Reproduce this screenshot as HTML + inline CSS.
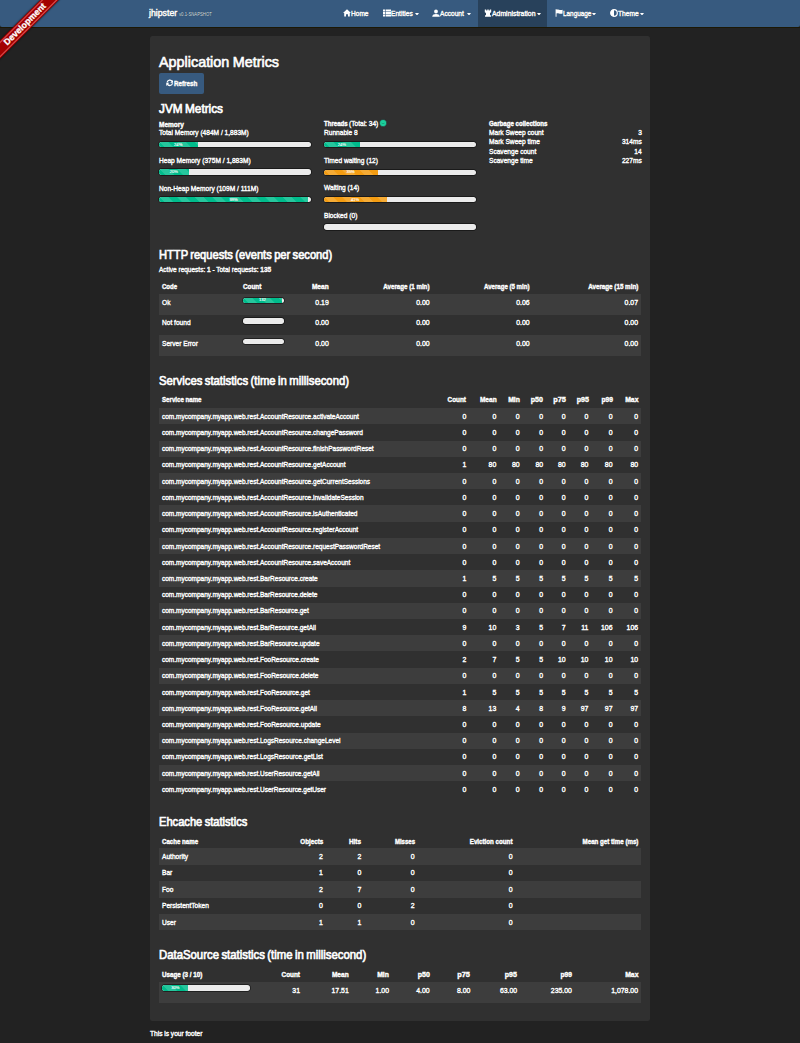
<!DOCTYPE html>
<html><head><meta charset="utf-8"><title>Metrics</title>
<style>
html,body{margin:0;padding:0;}
body{width:800px;height:1043px;background:#222222;position:relative;overflow:hidden;font-family:"Liberation Sans", sans-serif;color:#fff;}
.t{position:absolute;line-height:0;white-space:nowrap;-webkit-text-stroke:0.38px currentColor;text-shadow:0 0 0.7px rgba(0,0,0,.7);}
.ic{position:absolute;}
.caret{position:absolute;width:0;height:0;border-left:1.9px solid transparent;border-right:1.9px solid transparent;border-top:2.1px solid #fff;}
.prog{position:absolute;background:#ebebeb;overflow:hidden;box-shadow:0 0 0.6px 0.7px rgba(0,0,0,.6);}
.pb{height:100%;position:relative;background-image:linear-gradient(45deg,rgba(255,255,255,.15) 25%,transparent 25%,transparent 50%,rgba(255,255,255,.15) 50%,rgba(255,255,255,.15) 75%,transparent 75%,transparent);background-size:17.6px 17.6px;}
.pl{position:absolute;left:0;right:0;top:50%;text-align:center;font-size:4.1px;line-height:0;color:#fff;-webkit-text-stroke:0.12px #fff;}
.ribbon-wrap{position:absolute;left:0;top:0;width:90px;height:90px;overflow:hidden;z-index:10;}
.ribbon{position:absolute;left:-35.5px;top:18.1px;width:120px;height:12.7px;line-height:12.7px;background:#a30000;color:#fff;font-weight:700;font-size:8.8px;text-align:center;transform:rotate(-45deg);box-shadow:0 0 1.5px 0.5px rgba(0,0,0,.55);-webkit-text-stroke:0.3px #fff;}
.ribbon::after{content:"";position:absolute;left:0;right:0;top:0.9px;bottom:0.9px;border-top:0.7px solid rgba(255,140,140,.55);border-bottom:0.7px solid rgba(255,140,140,.65);}
</style></head><body>
<div style="position:absolute;left:0.00px;top:0.00px;width:800.00px;height:26.70px;background:#375a7f;border-radius:0 0 2px 2px"></div>
<div style="position:absolute;left:478.10px;top:0.00px;width:68.80px;height:26.70px;background:#28415b"></div>
<div style="position:absolute;left:0.00px;top:26.70px;width:800.00px;height:1.20px;background:#1c1805"></div>
<div class="t" style="left:149.00px;top:13.13px;font-size:9.0px;transform:scaleX(0.9719);transform-origin:left;-webkit-text-stroke-width:0.45px;">jhipster</div>
<div class="t" style="left:179.40px;top:14.64px;font-size:4.5px;color:#dde3ea;transform:scaleX(0.9435);transform-origin:left;-webkit-text-stroke-width:0px;">v0.1-SNAPSHOT</div>
<svg class="ic" style="left:343.1px;top:8.8px;width:8px;height:8px" viewBox="0 0 8 8"><path d="M4 0.3L0 4H1.2V7.6H3V5.2H5V7.6H6.8V4H8Z" fill="#fff"/></svg>
<div class="t" style="left:351.00px;top:13.61px;font-size:6.9px;transform:scaleX(0.9516);transform-origin:left;">Home</div>
<svg class="ic" style="left:382.5px;top:8.8px;width:8px;height:8px" viewBox="0 0 8 8"><path d="M0 0.6H2V2.4H0ZM2.6 0.6H8V2.4H2.6ZM0 3.1H2V4.9H0ZM2.6 3.1H8V4.9H2.6ZM0 5.6H2V7.4H0ZM2.6 5.6H8V7.4H2.6Z" fill="#fff"/></svg>
<div class="t" style="left:390.60px;top:13.61px;font-size:6.9px;transform:scaleX(0.9598);transform-origin:left;">Entities</div>
<svg class="ic" style="left:432.0px;top:8.8px;width:8px;height:8px" viewBox="0 0 8 8"><path d="M4 0.4A1.9 2.1 0 1 1 4 4.6A1.9 2.1 0 1 1 4 0.4ZM0.2 7.8C0.4 5.6 2 4.9 4 4.9S7.6 5.6 7.8 7.8Z" fill="#fff"/></svg>
<div class="t" style="left:440.00px;top:13.61px;font-size:6.9px;transform:scaleX(0.9556);transform-origin:left;">Account</div>
<svg class="ic" style="left:483.6px;top:8.8px;width:8px;height:8px" viewBox="0 0 8 8"><path d="M0.8 0.4H2.2V1.4H3.3V0.4H4.7V1.4H5.8V0.4H7.2V3.2L6 4V6.2H7V7.8H1V6.2H2V4L0.8 3.2Z" fill="#fff"/></svg>
<div class="t" style="left:491.50px;top:13.61px;font-size:6.9px;transform:scaleX(0.9961);transform-origin:left;">Administration</div>
<svg class="ic" style="left:554.7px;top:8.8px;width:8px;height:8px" viewBox="0 0 8 8"><path d="M0.6 0.2H1.5V7.8H0.6ZM1.5 0.6C3 -0.2 4.6 1.6 7.6 0.8V4.6C4.6 5.4 3 3.6 1.5 4.4Z" fill="#fff"/></svg>
<div class="t" style="left:562.50px;top:13.61px;font-size:6.9px;transform:scaleX(0.9259);transform-origin:left;">Language</div>
<svg class="ic" style="left:609.8px;top:8.8px;width:8px;height:8px" viewBox="0 0 8 8"><circle cx="4" cy="4" r="3.3" fill="none" stroke="#fff" stroke-width="1.2"/><path d="M4 0.7A3.3 3.3 0 0 0 4 7.3Z" fill="#fff"/></svg>
<div class="t" style="left:617.80px;top:13.61px;font-size:6.9px;transform:scaleX(0.9696);transform-origin:left;">Theme</div>
<svg class="ic" style="left:414.70px;top:12.5px;width:4px;height:2.6px" viewBox="0 0 4 2.6"><path d="M0 0H4L2 2.6Z" fill="#fff"/></svg>
<svg class="ic" style="left:466.90px;top:12.5px;width:4px;height:2.6px" viewBox="0 0 4 2.6"><path d="M0 0H4L2 2.6Z" fill="#fff"/></svg>
<svg class="ic" style="left:537.20px;top:12.5px;width:4px;height:2.6px" viewBox="0 0 4 2.6"><path d="M0 0H4L2 2.6Z" fill="#fff"/></svg>
<svg class="ic" style="left:592.40px;top:12.5px;width:4px;height:2.6px" viewBox="0 0 4 2.6"><path d="M0 0H4L2 2.6Z" fill="#fff"/></svg>
<svg class="ic" style="left:640.00px;top:12.5px;width:4px;height:2.6px" viewBox="0 0 4 2.6"><path d="M0 0H4L2 2.6Z" fill="#fff"/></svg>
<div class="ribbon-wrap"><div class="ribbon">Development</div></div>
<div style="position:absolute;left:150.00px;top:35.50px;width:500.20px;height:985.20px;background:#303030;border-radius:2.5px"></div>
<div class="t" style="left:158.60px;top:61.94px;font-size:14.6px;transform:scaleX(0.9846);transform-origin:left;-webkit-text-stroke-width:0.65px;word-spacing:-0.6px;">Application Metrics</div>
<div style="position:absolute;left:158.80px;top:73.40px;width:45.40px;height:20.30px;background:#375a7f;border-radius:2px"></div>
<svg class="ic" style="left:165.6px;top:79.2px;width:7.6px;height:7.6px" viewBox="0 0 10 10"><path d="M8.2 3.3A3.6 3.6 0 0 0 1.5 4.4" fill="none" stroke="#fff" stroke-width="1.7"/><path d="M9.7 0.8V4.9H5.6Z" fill="#fff"/><path d="M1.8 6.7A3.6 3.6 0 0 0 8.5 5.6" fill="none" stroke="#fff" stroke-width="1.7"/><path d="M0.3 9.2V5.1H4.4Z" fill="#fff"/></svg>
<div class="t" style="left:173.60px;top:83.91px;font-size:6.9px;font-weight:700;transform:scaleX(0.9037);transform-origin:left;-webkit-text-stroke-width:0.42px;">Refresh</div>
<div class="t" style="left:158.60px;top:108.70px;font-size:12.4px;transform:scaleX(0.9501);transform-origin:left;-webkit-text-stroke-width:0.7px;word-spacing:-0.8px;">JVM Metrics</div>
<div class="t" style="left:158.60px;top:124.51px;font-size:6.9px;font-weight:700;transform:scaleX(0.9456);transform-origin:left;-webkit-text-stroke-width:0.42px;">Memory</div>
<div class="t" style="left:158.75px;top:133.31px;font-size:6.9px;transform:scaleX(0.9565);transform-origin:left;">Total Memory (484M / 1,883M)</div>
<div class="prog" style="left:158.55px;top:142.10px;width:152.95px;height:5.40px;border-radius:2.70px"><div class="pb" style="width:39.31px;background-color:#00bc8c"><span class="pl">24%</span></div></div>
<div class="t" style="left:158.75px;top:160.91px;font-size:6.9px;transform:scaleX(0.9565);transform-origin:left;">Heap Memory (375M / 1,883M)</div>
<div class="prog" style="left:158.55px;top:169.40px;width:152.95px;height:5.40px;border-radius:2.70px"><div class="pb" style="width:30.59px;background-color:#00bc8c"><span class="pl">20%</span></div></div>
<div class="t" style="left:158.75px;top:188.51px;font-size:6.9px;transform:scaleX(0.9565);transform-origin:left;">Non-Heap Memory (109M / 111M)</div>
<div class="prog" style="left:158.55px;top:197.00px;width:152.95px;height:5.40px;border-radius:2.70px"><div class="pb" style="width:149.89px;background-color:#00bc8c"><span class="pl">98%</span></div></div>
<div class="t" style="left:323.60px;top:124.31px;font-size:6.9px;font-weight:700;transform:scaleX(0.8802);transform-origin:left;-webkit-text-stroke-width:0.42px;">Threads</div>
<div class="t" style="left:349.20px;top:124.31px;font-size:6.9px;transform:scaleX(0.9565);transform-origin:left;">(Total: 34)</div>
<svg class="ic" style="left:379.2px;top:119.4px;width:8.2px;height:8.2px" viewBox="0 0 8 8"><circle cx="4" cy="4" r="3.55" fill="#1ccf9c" stroke="rgba(50,0,25,.75)" stroke-width="0.6"/><path d="M1.9 3.3Q4 6.2 6.1 3.3Q4 4.5 1.9 3.3Z" fill="#0e9670"/></svg>
<div class="t" style="left:323.60px;top:133.21px;font-size:6.9px;transform:scaleX(0.9565);transform-origin:left;">Runnable 8</div>
<div class="prog" style="left:323.55px;top:142.00px;width:152.95px;height:5.40px;border-radius:2.70px"><div class="pb" style="width:36.71px;background-color:#00bc8c"><span class="pl">24%</span></div></div>
<div class="t" style="left:323.60px;top:160.81px;font-size:6.9px;transform:scaleX(0.9565);transform-origin:left;">Timed waiting (12)</div>
<div class="prog" style="left:323.55px;top:169.60px;width:152.95px;height:5.40px;border-radius:2.70px"><div class="pb" style="width:53.99px;background-color:#f39c12"><span class="pl">35%</span></div></div>
<div class="t" style="left:323.60px;top:188.46px;font-size:6.9px;transform:scaleX(0.9565);transform-origin:left;">Waiting (14)</div>
<div class="prog" style="left:323.55px;top:196.90px;width:152.95px;height:5.40px;border-radius:2.70px"><div class="pb" style="width:63.02px;background-color:#f39c12"><span class="pl">41%</span></div></div>
<div class="t" style="left:323.60px;top:216.11px;font-size:6.9px;transform:scaleX(0.9565);transform-origin:left;">Blocked (0)</div>
<div class="prog" style="left:323.55px;top:224.30px;width:152.95px;height:5.40px;border-radius:2.70px"></div>
<div class="t" style="left:488.90px;top:124.31px;font-size:6.9px;font-weight:700;transform:scaleX(0.888);transform-origin:left;-webkit-text-stroke-width:0.42px;">Garbage collections</div>
<div class="t" style="left:488.90px;top:133.21px;font-size:6.9px;transform:scaleX(0.9565);transform-origin:left;">Mark Sweep count</div>
<div class="t" style="right:158.50px;top:133.21px;font-size:6.9px;transform:scaleX(0.9565);transform-origin:right;">3</div>
<div class="t" style="left:488.90px;top:142.36px;font-size:6.9px;transform:scaleX(0.9565);transform-origin:left;">Mark Sweep time</div>
<div class="t" style="right:158.50px;top:142.36px;font-size:6.9px;transform:scaleX(0.9565);transform-origin:right;">314ms</div>
<div class="t" style="left:488.90px;top:151.51px;font-size:6.9px;transform:scaleX(0.9565);transform-origin:left;">Scavenge count</div>
<div class="t" style="right:158.50px;top:151.51px;font-size:6.9px;transform:scaleX(0.9565);transform-origin:right;">14</div>
<div class="t" style="left:488.90px;top:160.66px;font-size:6.9px;transform:scaleX(0.9565);transform-origin:left;">Scavenge time</div>
<div class="t" style="right:158.50px;top:160.66px;font-size:6.9px;transform:scaleX(0.9565);transform-origin:right;">227ms</div>
<div class="t" style="left:158.60px;top:254.70px;font-size:12.4px;transform:scaleX(0.8981);transform-origin:left;-webkit-text-stroke-width:0.7px;word-spacing:-0.8px;">HTTP requests (events per second)</div>
<div class="t" style="left:158.75px;top:269.81px;font-size:6.9px;transform:scaleX(0.942);transform-origin:left;">Active requests: <b>1</b> - Total requests: <b>135</b></div>
<div class="t" style="left:162.00px;top:286.71px;font-size:6.9px;font-weight:700;transform:scaleX(0.8762);transform-origin:left;-webkit-text-stroke-width:0.42px;">Code</div>
<div class="t" style="left:242.50px;top:286.71px;font-size:6.9px;font-weight:700;transform:scaleX(0.9218);transform-origin:left;-webkit-text-stroke-width:0.42px;">Count</div>
<div class="t" style="right:471.25px;top:286.71px;font-size:6.9px;font-weight:700;transform:scaleX(0.9475);transform-origin:right;-webkit-text-stroke-width:0.42px;">Mean</div>
<div class="t" style="right:370.30px;top:286.71px;font-size:6.9px;font-weight:700;transform:scaleX(0.896);transform-origin:right;-webkit-text-stroke-width:0.42px;">Average (1 min)</div>
<div class="t" style="right:270.30px;top:286.71px;font-size:6.9px;font-weight:700;transform:scaleX(0.8843);transform-origin:right;-webkit-text-stroke-width:0.42px;">Average (5 min)</div>
<div class="t" style="right:162.00px;top:286.71px;font-size:6.9px;font-weight:700;transform:scaleX(0.9063);transform-origin:right;-webkit-text-stroke-width:0.42px;">Average (15 min)</div>
<div style="position:absolute;left:158.75px;top:294.10px;width:482.50px;height:20.65px;background:#3d3d3d"></div>
<div class="t" style="left:162.00px;top:302.71px;font-size:6.9px;transform:scaleX(0.9565);transform-origin:left;">Ok</div>
<div class="prog" style="left:242.65px;top:297.50px;width:41.45px;height:5.40px;border-radius:2.70px"><div class="pb" style="width:39.38px;background-color:#00bc8c"><span class="pl">132</span></div></div>
<div class="t" style="right:471.25px;top:302.71px;font-size:6.9px;">0.19</div>
<div class="t" style="right:370.30px;top:302.71px;font-size:6.9px;">0.00</div>
<div class="t" style="right:270.30px;top:302.71px;font-size:6.9px;">0.06</div>
<div class="t" style="right:162.00px;top:302.71px;font-size:6.9px;">0.07</div>
<div class="t" style="left:162.00px;top:323.36px;font-size:6.9px;transform:scaleX(0.9565);transform-origin:left;">Not found</div>
<div class="prog" style="left:242.65px;top:318.15px;width:41.45px;height:5.40px;border-radius:2.70px"></div>
<div class="t" style="right:471.25px;top:323.36px;font-size:6.9px;">0.00</div>
<div class="t" style="right:370.30px;top:323.36px;font-size:6.9px;">0.00</div>
<div class="t" style="right:270.30px;top:323.36px;font-size:6.9px;">0.00</div>
<div class="t" style="right:162.00px;top:323.36px;font-size:6.9px;">0.00</div>
<div style="position:absolute;left:158.75px;top:335.40px;width:482.50px;height:20.65px;background:#3d3d3d"></div>
<div class="t" style="left:162.00px;top:344.01px;font-size:6.9px;transform:scaleX(0.9565);transform-origin:left;">Server Error</div>
<div class="prog" style="left:242.65px;top:338.80px;width:41.45px;height:5.40px;border-radius:2.70px"></div>
<div class="t" style="right:471.25px;top:344.01px;font-size:6.9px;">0.00</div>
<div class="t" style="right:370.30px;top:344.01px;font-size:6.9px;">0.00</div>
<div class="t" style="right:270.30px;top:344.01px;font-size:6.9px;">0.00</div>
<div class="t" style="right:162.00px;top:344.01px;font-size:6.9px;">0.00</div>
<div class="t" style="left:158.60px;top:380.60px;font-size:12.4px;transform:scaleX(0.9126);transform-origin:left;-webkit-text-stroke-width:0.7px;word-spacing:-0.8px;">Services statistics (time in millisecond)</div>
<div class="t" style="left:162.00px;top:400.41px;font-size:6.9px;font-weight:700;transform:scaleX(0.8889);transform-origin:left;-webkit-text-stroke-width:0.42px;">Service name</div>
<div class="t" style="right:333.75px;top:400.41px;font-size:6.9px;font-weight:700;transform:scaleX(0.9218);transform-origin:right;-webkit-text-stroke-width:0.42px;">Count</div>
<div class="t" style="right:303.75px;top:400.41px;font-size:6.9px;font-weight:700;transform:scaleX(0.9475);transform-origin:right;-webkit-text-stroke-width:0.42px;">Mean</div>
<div class="t" style="right:280.30px;top:400.41px;font-size:6.9px;font-weight:700;transform:scaleX(0.9853);transform-origin:right;-webkit-text-stroke-width:0.42px;">Min</div>
<div class="t" style="right:256.90px;top:400.41px;font-size:6.9px;font-weight:700;transform:scaleX(1.0189);transform-origin:right;-webkit-text-stroke-width:0.42px;">p50</div>
<div class="t" style="right:234.40px;top:400.41px;font-size:6.9px;font-weight:700;transform:scaleX(1.0695);transform-origin:right;-webkit-text-stroke-width:0.42px;">p75</div>
<div class="t" style="right:211.60px;top:400.41px;font-size:6.9px;font-weight:700;transform:scaleX(1.0189);transform-origin:right;-webkit-text-stroke-width:0.42px;">p95</div>
<div class="t" style="right:187.50px;top:400.41px;font-size:6.9px;font-weight:700;transform:scaleX(0.9684);transform-origin:right;-webkit-text-stroke-width:0.42px;">p99</div>
<div class="t" style="right:161.90px;top:400.41px;font-size:6.9px;font-weight:700;transform:scaleX(0.9846);transform-origin:right;-webkit-text-stroke-width:0.42px;">Max</div>
<div style="position:absolute;left:158.75px;top:408.10px;width:482.50px;height:16.23px;background:#3d3d3d"></div>
<div class="t" style="left:162.00px;top:416.71px;font-size:6.9px;transform:scaleX(0.942);transform-origin:left;">com.mycompany.myapp.web.rest.AccountResource.activateAccount</div>
<div class="t" style="right:333.75px;top:416.71px;font-size:6.9px;">0</div>
<div class="t" style="right:303.75px;top:416.71px;font-size:6.9px;">0</div>
<div class="t" style="right:280.30px;top:416.71px;font-size:6.9px;">0</div>
<div class="t" style="right:256.90px;top:416.71px;font-size:6.9px;">0</div>
<div class="t" style="right:234.40px;top:416.71px;font-size:6.9px;">0</div>
<div class="t" style="right:211.60px;top:416.71px;font-size:6.9px;">0</div>
<div class="t" style="right:187.50px;top:416.71px;font-size:6.9px;">0</div>
<div class="t" style="right:161.90px;top:416.71px;font-size:6.9px;">0</div>
<div class="t" style="left:162.00px;top:432.93px;font-size:6.9px;transform:scaleX(0.942);transform-origin:left;">com.mycompany.myapp.web.rest.AccountResource.changePassword</div>
<div class="t" style="right:333.75px;top:432.93px;font-size:6.9px;">0</div>
<div class="t" style="right:303.75px;top:432.93px;font-size:6.9px;">0</div>
<div class="t" style="right:280.30px;top:432.93px;font-size:6.9px;">0</div>
<div class="t" style="right:256.90px;top:432.93px;font-size:6.9px;">0</div>
<div class="t" style="right:234.40px;top:432.93px;font-size:6.9px;">0</div>
<div class="t" style="right:211.60px;top:432.93px;font-size:6.9px;">0</div>
<div class="t" style="right:187.50px;top:432.93px;font-size:6.9px;">0</div>
<div class="t" style="right:161.90px;top:432.93px;font-size:6.9px;">0</div>
<div style="position:absolute;left:158.75px;top:440.55px;width:482.50px;height:16.23px;background:#3d3d3d"></div>
<div class="t" style="left:162.00px;top:449.16px;font-size:6.9px;transform:scaleX(0.942);transform-origin:left;">com.mycompany.myapp.web.rest.AccountResource.finishPasswordReset</div>
<div class="t" style="right:333.75px;top:449.16px;font-size:6.9px;">0</div>
<div class="t" style="right:303.75px;top:449.16px;font-size:6.9px;">0</div>
<div class="t" style="right:280.30px;top:449.16px;font-size:6.9px;">0</div>
<div class="t" style="right:256.90px;top:449.16px;font-size:6.9px;">0</div>
<div class="t" style="right:234.40px;top:449.16px;font-size:6.9px;">0</div>
<div class="t" style="right:211.60px;top:449.16px;font-size:6.9px;">0</div>
<div class="t" style="right:187.50px;top:449.16px;font-size:6.9px;">0</div>
<div class="t" style="right:161.90px;top:449.16px;font-size:6.9px;">0</div>
<div class="t" style="left:162.00px;top:465.38px;font-size:6.9px;transform:scaleX(0.942);transform-origin:left;">com.mycompany.myapp.web.rest.AccountResource.getAccount</div>
<div class="t" style="right:333.75px;top:465.38px;font-size:6.9px;">1</div>
<div class="t" style="right:303.75px;top:465.38px;font-size:6.9px;">80</div>
<div class="t" style="right:280.30px;top:465.38px;font-size:6.9px;">80</div>
<div class="t" style="right:256.90px;top:465.38px;font-size:6.9px;">80</div>
<div class="t" style="right:234.40px;top:465.38px;font-size:6.9px;">80</div>
<div class="t" style="right:211.60px;top:465.38px;font-size:6.9px;">80</div>
<div class="t" style="right:187.50px;top:465.38px;font-size:6.9px;">80</div>
<div class="t" style="right:161.90px;top:465.38px;font-size:6.9px;">80</div>
<div style="position:absolute;left:158.75px;top:473.00px;width:482.50px;height:16.23px;background:#3d3d3d"></div>
<div class="t" style="left:162.00px;top:481.61px;font-size:6.9px;transform:scaleX(0.942);transform-origin:left;">com.mycompany.myapp.web.rest.AccountResource.getCurrentSessions</div>
<div class="t" style="right:333.75px;top:481.61px;font-size:6.9px;">0</div>
<div class="t" style="right:303.75px;top:481.61px;font-size:6.9px;">0</div>
<div class="t" style="right:280.30px;top:481.61px;font-size:6.9px;">0</div>
<div class="t" style="right:256.90px;top:481.61px;font-size:6.9px;">0</div>
<div class="t" style="right:234.40px;top:481.61px;font-size:6.9px;">0</div>
<div class="t" style="right:211.60px;top:481.61px;font-size:6.9px;">0</div>
<div class="t" style="right:187.50px;top:481.61px;font-size:6.9px;">0</div>
<div class="t" style="right:161.90px;top:481.61px;font-size:6.9px;">0</div>
<div class="t" style="left:162.00px;top:497.83px;font-size:6.9px;transform:scaleX(0.942);transform-origin:left;">com.mycompany.myapp.web.rest.AccountResource.invalidateSession</div>
<div class="t" style="right:333.75px;top:497.83px;font-size:6.9px;">0</div>
<div class="t" style="right:303.75px;top:497.83px;font-size:6.9px;">0</div>
<div class="t" style="right:280.30px;top:497.83px;font-size:6.9px;">0</div>
<div class="t" style="right:256.90px;top:497.83px;font-size:6.9px;">0</div>
<div class="t" style="right:234.40px;top:497.83px;font-size:6.9px;">0</div>
<div class="t" style="right:211.60px;top:497.83px;font-size:6.9px;">0</div>
<div class="t" style="right:187.50px;top:497.83px;font-size:6.9px;">0</div>
<div class="t" style="right:161.90px;top:497.83px;font-size:6.9px;">0</div>
<div style="position:absolute;left:158.75px;top:505.45px;width:482.50px;height:16.23px;background:#3d3d3d"></div>
<div class="t" style="left:162.00px;top:514.06px;font-size:6.9px;transform:scaleX(0.942);transform-origin:left;">com.mycompany.myapp.web.rest.AccountResource.isAuthenticated</div>
<div class="t" style="right:333.75px;top:514.06px;font-size:6.9px;">0</div>
<div class="t" style="right:303.75px;top:514.06px;font-size:6.9px;">0</div>
<div class="t" style="right:280.30px;top:514.06px;font-size:6.9px;">0</div>
<div class="t" style="right:256.90px;top:514.06px;font-size:6.9px;">0</div>
<div class="t" style="right:234.40px;top:514.06px;font-size:6.9px;">0</div>
<div class="t" style="right:211.60px;top:514.06px;font-size:6.9px;">0</div>
<div class="t" style="right:187.50px;top:514.06px;font-size:6.9px;">0</div>
<div class="t" style="right:161.90px;top:514.06px;font-size:6.9px;">0</div>
<div class="t" style="left:162.00px;top:530.28px;font-size:6.9px;transform:scaleX(0.942);transform-origin:left;">com.mycompany.myapp.web.rest.AccountResource.registerAccount</div>
<div class="t" style="right:333.75px;top:530.28px;font-size:6.9px;">0</div>
<div class="t" style="right:303.75px;top:530.28px;font-size:6.9px;">0</div>
<div class="t" style="right:280.30px;top:530.28px;font-size:6.9px;">0</div>
<div class="t" style="right:256.90px;top:530.28px;font-size:6.9px;">0</div>
<div class="t" style="right:234.40px;top:530.28px;font-size:6.9px;">0</div>
<div class="t" style="right:211.60px;top:530.28px;font-size:6.9px;">0</div>
<div class="t" style="right:187.50px;top:530.28px;font-size:6.9px;">0</div>
<div class="t" style="right:161.90px;top:530.28px;font-size:6.9px;">0</div>
<div style="position:absolute;left:158.75px;top:537.90px;width:482.50px;height:16.23px;background:#3d3d3d"></div>
<div class="t" style="left:162.00px;top:546.51px;font-size:6.9px;transform:scaleX(0.942);transform-origin:left;">com.mycompany.myapp.web.rest.AccountResource.requestPasswordReset</div>
<div class="t" style="right:333.75px;top:546.51px;font-size:6.9px;">0</div>
<div class="t" style="right:303.75px;top:546.51px;font-size:6.9px;">0</div>
<div class="t" style="right:280.30px;top:546.51px;font-size:6.9px;">0</div>
<div class="t" style="right:256.90px;top:546.51px;font-size:6.9px;">0</div>
<div class="t" style="right:234.40px;top:546.51px;font-size:6.9px;">0</div>
<div class="t" style="right:211.60px;top:546.51px;font-size:6.9px;">0</div>
<div class="t" style="right:187.50px;top:546.51px;font-size:6.9px;">0</div>
<div class="t" style="right:161.90px;top:546.51px;font-size:6.9px;">0</div>
<div class="t" style="left:162.00px;top:562.73px;font-size:6.9px;transform:scaleX(0.942);transform-origin:left;">com.mycompany.myapp.web.rest.AccountResource.saveAccount</div>
<div class="t" style="right:333.75px;top:562.73px;font-size:6.9px;">0</div>
<div class="t" style="right:303.75px;top:562.73px;font-size:6.9px;">0</div>
<div class="t" style="right:280.30px;top:562.73px;font-size:6.9px;">0</div>
<div class="t" style="right:256.90px;top:562.73px;font-size:6.9px;">0</div>
<div class="t" style="right:234.40px;top:562.73px;font-size:6.9px;">0</div>
<div class="t" style="right:211.60px;top:562.73px;font-size:6.9px;">0</div>
<div class="t" style="right:187.50px;top:562.73px;font-size:6.9px;">0</div>
<div class="t" style="right:161.90px;top:562.73px;font-size:6.9px;">0</div>
<div style="position:absolute;left:158.75px;top:570.35px;width:482.50px;height:16.23px;background:#3d3d3d"></div>
<div class="t" style="left:162.00px;top:578.96px;font-size:6.9px;transform:scaleX(0.942);transform-origin:left;">com.mycompany.myapp.web.rest.BarResource.create</div>
<div class="t" style="right:333.75px;top:578.96px;font-size:6.9px;">1</div>
<div class="t" style="right:303.75px;top:578.96px;font-size:6.9px;">5</div>
<div class="t" style="right:280.30px;top:578.96px;font-size:6.9px;">5</div>
<div class="t" style="right:256.90px;top:578.96px;font-size:6.9px;">5</div>
<div class="t" style="right:234.40px;top:578.96px;font-size:6.9px;">5</div>
<div class="t" style="right:211.60px;top:578.96px;font-size:6.9px;">5</div>
<div class="t" style="right:187.50px;top:578.96px;font-size:6.9px;">5</div>
<div class="t" style="right:161.90px;top:578.96px;font-size:6.9px;">5</div>
<div class="t" style="left:162.00px;top:595.18px;font-size:6.9px;transform:scaleX(0.942);transform-origin:left;">com.mycompany.myapp.web.rest.BarResource.delete</div>
<div class="t" style="right:333.75px;top:595.18px;font-size:6.9px;">0</div>
<div class="t" style="right:303.75px;top:595.18px;font-size:6.9px;">0</div>
<div class="t" style="right:280.30px;top:595.18px;font-size:6.9px;">0</div>
<div class="t" style="right:256.90px;top:595.18px;font-size:6.9px;">0</div>
<div class="t" style="right:234.40px;top:595.18px;font-size:6.9px;">0</div>
<div class="t" style="right:211.60px;top:595.18px;font-size:6.9px;">0</div>
<div class="t" style="right:187.50px;top:595.18px;font-size:6.9px;">0</div>
<div class="t" style="right:161.90px;top:595.18px;font-size:6.9px;">0</div>
<div style="position:absolute;left:158.75px;top:602.80px;width:482.50px;height:16.23px;background:#3d3d3d"></div>
<div class="t" style="left:162.00px;top:611.41px;font-size:6.9px;transform:scaleX(0.942);transform-origin:left;">com.mycompany.myapp.web.rest.BarResource.get</div>
<div class="t" style="right:333.75px;top:611.41px;font-size:6.9px;">0</div>
<div class="t" style="right:303.75px;top:611.41px;font-size:6.9px;">0</div>
<div class="t" style="right:280.30px;top:611.41px;font-size:6.9px;">0</div>
<div class="t" style="right:256.90px;top:611.41px;font-size:6.9px;">0</div>
<div class="t" style="right:234.40px;top:611.41px;font-size:6.9px;">0</div>
<div class="t" style="right:211.60px;top:611.41px;font-size:6.9px;">0</div>
<div class="t" style="right:187.50px;top:611.41px;font-size:6.9px;">0</div>
<div class="t" style="right:161.90px;top:611.41px;font-size:6.9px;">0</div>
<div class="t" style="left:162.00px;top:627.63px;font-size:6.9px;transform:scaleX(0.942);transform-origin:left;">com.mycompany.myapp.web.rest.BarResource.getAll</div>
<div class="t" style="right:333.75px;top:627.63px;font-size:6.9px;">9</div>
<div class="t" style="right:303.75px;top:627.63px;font-size:6.9px;">10</div>
<div class="t" style="right:280.30px;top:627.63px;font-size:6.9px;">3</div>
<div class="t" style="right:256.90px;top:627.63px;font-size:6.9px;">5</div>
<div class="t" style="right:234.40px;top:627.63px;font-size:6.9px;">7</div>
<div class="t" style="right:211.60px;top:627.63px;font-size:6.9px;">11</div>
<div class="t" style="right:187.50px;top:627.63px;font-size:6.9px;">106</div>
<div class="t" style="right:161.90px;top:627.63px;font-size:6.9px;">106</div>
<div style="position:absolute;left:158.75px;top:635.25px;width:482.50px;height:16.23px;background:#3d3d3d"></div>
<div class="t" style="left:162.00px;top:643.86px;font-size:6.9px;transform:scaleX(0.942);transform-origin:left;">com.mycompany.myapp.web.rest.BarResource.update</div>
<div class="t" style="right:333.75px;top:643.86px;font-size:6.9px;">0</div>
<div class="t" style="right:303.75px;top:643.86px;font-size:6.9px;">0</div>
<div class="t" style="right:280.30px;top:643.86px;font-size:6.9px;">0</div>
<div class="t" style="right:256.90px;top:643.86px;font-size:6.9px;">0</div>
<div class="t" style="right:234.40px;top:643.86px;font-size:6.9px;">0</div>
<div class="t" style="right:211.60px;top:643.86px;font-size:6.9px;">0</div>
<div class="t" style="right:187.50px;top:643.86px;font-size:6.9px;">0</div>
<div class="t" style="right:161.90px;top:643.86px;font-size:6.9px;">0</div>
<div class="t" style="left:162.00px;top:660.08px;font-size:6.9px;transform:scaleX(0.942);transform-origin:left;">com.mycompany.myapp.web.rest.FooResource.create</div>
<div class="t" style="right:333.75px;top:660.08px;font-size:6.9px;">2</div>
<div class="t" style="right:303.75px;top:660.08px;font-size:6.9px;">7</div>
<div class="t" style="right:280.30px;top:660.08px;font-size:6.9px;">5</div>
<div class="t" style="right:256.90px;top:660.08px;font-size:6.9px;">5</div>
<div class="t" style="right:234.40px;top:660.08px;font-size:6.9px;">10</div>
<div class="t" style="right:211.60px;top:660.08px;font-size:6.9px;">10</div>
<div class="t" style="right:187.50px;top:660.08px;font-size:6.9px;">10</div>
<div class="t" style="right:161.90px;top:660.08px;font-size:6.9px;">10</div>
<div style="position:absolute;left:158.75px;top:667.70px;width:482.50px;height:16.23px;background:#3d3d3d"></div>
<div class="t" style="left:162.00px;top:676.31px;font-size:6.9px;transform:scaleX(0.942);transform-origin:left;">com.mycompany.myapp.web.rest.FooResource.delete</div>
<div class="t" style="right:333.75px;top:676.31px;font-size:6.9px;">0</div>
<div class="t" style="right:303.75px;top:676.31px;font-size:6.9px;">0</div>
<div class="t" style="right:280.30px;top:676.31px;font-size:6.9px;">0</div>
<div class="t" style="right:256.90px;top:676.31px;font-size:6.9px;">0</div>
<div class="t" style="right:234.40px;top:676.31px;font-size:6.9px;">0</div>
<div class="t" style="right:211.60px;top:676.31px;font-size:6.9px;">0</div>
<div class="t" style="right:187.50px;top:676.31px;font-size:6.9px;">0</div>
<div class="t" style="right:161.90px;top:676.31px;font-size:6.9px;">0</div>
<div class="t" style="left:162.00px;top:692.53px;font-size:6.9px;transform:scaleX(0.942);transform-origin:left;">com.mycompany.myapp.web.rest.FooResource.get</div>
<div class="t" style="right:333.75px;top:692.53px;font-size:6.9px;">1</div>
<div class="t" style="right:303.75px;top:692.53px;font-size:6.9px;">5</div>
<div class="t" style="right:280.30px;top:692.53px;font-size:6.9px;">5</div>
<div class="t" style="right:256.90px;top:692.53px;font-size:6.9px;">5</div>
<div class="t" style="right:234.40px;top:692.53px;font-size:6.9px;">5</div>
<div class="t" style="right:211.60px;top:692.53px;font-size:6.9px;">5</div>
<div class="t" style="right:187.50px;top:692.53px;font-size:6.9px;">5</div>
<div class="t" style="right:161.90px;top:692.53px;font-size:6.9px;">5</div>
<div style="position:absolute;left:158.75px;top:700.15px;width:482.50px;height:16.23px;background:#3d3d3d"></div>
<div class="t" style="left:162.00px;top:708.76px;font-size:6.9px;transform:scaleX(0.942);transform-origin:left;">com.mycompany.myapp.web.rest.FooResource.getAll</div>
<div class="t" style="right:333.75px;top:708.76px;font-size:6.9px;">8</div>
<div class="t" style="right:303.75px;top:708.76px;font-size:6.9px;">13</div>
<div class="t" style="right:280.30px;top:708.76px;font-size:6.9px;">4</div>
<div class="t" style="right:256.90px;top:708.76px;font-size:6.9px;">8</div>
<div class="t" style="right:234.40px;top:708.76px;font-size:6.9px;">9</div>
<div class="t" style="right:211.60px;top:708.76px;font-size:6.9px;">97</div>
<div class="t" style="right:187.50px;top:708.76px;font-size:6.9px;">97</div>
<div class="t" style="right:161.90px;top:708.76px;font-size:6.9px;">97</div>
<div class="t" style="left:162.00px;top:724.98px;font-size:6.9px;transform:scaleX(0.942);transform-origin:left;">com.mycompany.myapp.web.rest.FooResource.update</div>
<div class="t" style="right:333.75px;top:724.98px;font-size:6.9px;">0</div>
<div class="t" style="right:303.75px;top:724.98px;font-size:6.9px;">0</div>
<div class="t" style="right:280.30px;top:724.98px;font-size:6.9px;">0</div>
<div class="t" style="right:256.90px;top:724.98px;font-size:6.9px;">0</div>
<div class="t" style="right:234.40px;top:724.98px;font-size:6.9px;">0</div>
<div class="t" style="right:211.60px;top:724.98px;font-size:6.9px;">0</div>
<div class="t" style="right:187.50px;top:724.98px;font-size:6.9px;">0</div>
<div class="t" style="right:161.90px;top:724.98px;font-size:6.9px;">0</div>
<div style="position:absolute;left:158.75px;top:732.60px;width:482.50px;height:16.23px;background:#3d3d3d"></div>
<div class="t" style="left:162.00px;top:741.21px;font-size:6.9px;transform:scaleX(0.942);transform-origin:left;">com.mycompany.myapp.web.rest.LogsResource.changeLevel</div>
<div class="t" style="right:333.75px;top:741.21px;font-size:6.9px;">0</div>
<div class="t" style="right:303.75px;top:741.21px;font-size:6.9px;">0</div>
<div class="t" style="right:280.30px;top:741.21px;font-size:6.9px;">0</div>
<div class="t" style="right:256.90px;top:741.21px;font-size:6.9px;">0</div>
<div class="t" style="right:234.40px;top:741.21px;font-size:6.9px;">0</div>
<div class="t" style="right:211.60px;top:741.21px;font-size:6.9px;">0</div>
<div class="t" style="right:187.50px;top:741.21px;font-size:6.9px;">0</div>
<div class="t" style="right:161.90px;top:741.21px;font-size:6.9px;">0</div>
<div class="t" style="left:162.00px;top:757.43px;font-size:6.9px;transform:scaleX(0.942);transform-origin:left;">com.mycompany.myapp.web.rest.LogsResource.getList</div>
<div class="t" style="right:333.75px;top:757.43px;font-size:6.9px;">0</div>
<div class="t" style="right:303.75px;top:757.43px;font-size:6.9px;">0</div>
<div class="t" style="right:280.30px;top:757.43px;font-size:6.9px;">0</div>
<div class="t" style="right:256.90px;top:757.43px;font-size:6.9px;">0</div>
<div class="t" style="right:234.40px;top:757.43px;font-size:6.9px;">0</div>
<div class="t" style="right:211.60px;top:757.43px;font-size:6.9px;">0</div>
<div class="t" style="right:187.50px;top:757.43px;font-size:6.9px;">0</div>
<div class="t" style="right:161.90px;top:757.43px;font-size:6.9px;">0</div>
<div style="position:absolute;left:158.75px;top:765.05px;width:482.50px;height:16.23px;background:#3d3d3d"></div>
<div class="t" style="left:162.00px;top:773.66px;font-size:6.9px;transform:scaleX(0.942);transform-origin:left;">com.mycompany.myapp.web.rest.UserResource.getAll</div>
<div class="t" style="right:333.75px;top:773.66px;font-size:6.9px;">0</div>
<div class="t" style="right:303.75px;top:773.66px;font-size:6.9px;">0</div>
<div class="t" style="right:280.30px;top:773.66px;font-size:6.9px;">0</div>
<div class="t" style="right:256.90px;top:773.66px;font-size:6.9px;">0</div>
<div class="t" style="right:234.40px;top:773.66px;font-size:6.9px;">0</div>
<div class="t" style="right:211.60px;top:773.66px;font-size:6.9px;">0</div>
<div class="t" style="right:187.50px;top:773.66px;font-size:6.9px;">0</div>
<div class="t" style="right:161.90px;top:773.66px;font-size:6.9px;">0</div>
<div class="t" style="left:162.00px;top:789.88px;font-size:6.9px;transform:scaleX(0.942);transform-origin:left;">com.mycompany.myapp.web.rest.UserResource.getUser</div>
<div class="t" style="right:333.75px;top:789.88px;font-size:6.9px;">0</div>
<div class="t" style="right:303.75px;top:789.88px;font-size:6.9px;">0</div>
<div class="t" style="right:280.30px;top:789.88px;font-size:6.9px;">0</div>
<div class="t" style="right:256.90px;top:789.88px;font-size:6.9px;">0</div>
<div class="t" style="right:234.40px;top:789.88px;font-size:6.9px;">0</div>
<div class="t" style="right:211.60px;top:789.88px;font-size:6.9px;">0</div>
<div class="t" style="right:187.50px;top:789.88px;font-size:6.9px;">0</div>
<div class="t" style="right:161.90px;top:789.88px;font-size:6.9px;">0</div>
<div class="t" style="left:158.60px;top:821.90px;font-size:12.4px;transform:scaleX(0.8976);transform-origin:left;-webkit-text-stroke-width:0.7px;word-spacing:-0.8px;">Ehcache statistics</div>
<div class="t" style="left:162.00px;top:841.61px;font-size:6.9px;font-weight:700;transform:scaleX(0.889);transform-origin:left;-webkit-text-stroke-width:0.42px;">Cache name</div>
<div class="t" style="right:477.20px;top:841.61px;font-size:6.9px;font-weight:700;transform:scaleX(0.9098);transform-origin:right;-webkit-text-stroke-width:0.42px;">Objects</div>
<div class="t" style="right:438.75px;top:841.61px;font-size:6.9px;font-weight:700;transform:scaleX(0.9285);transform-origin:right;-webkit-text-stroke-width:0.42px;">Hits</div>
<div class="t" style="right:385.30px;top:841.61px;font-size:6.9px;font-weight:700;transform:scaleX(0.8745);transform-origin:right;-webkit-text-stroke-width:0.42px;">Misses</div>
<div class="t" style="right:287.50px;top:841.61px;font-size:6.9px;font-weight:700;transform:scaleX(0.8992);transform-origin:right;-webkit-text-stroke-width:0.42px;">Eviction count</div>
<div class="t" style="right:161.90px;top:841.61px;font-size:6.9px;font-weight:700;transform:scaleX(0.8939);transform-origin:right;-webkit-text-stroke-width:0.42px;">Mean get time (ms)</div>
<div style="position:absolute;left:158.75px;top:848.40px;width:482.50px;height:16.38px;background:#3d3d3d"></div>
<div class="t" style="left:162.00px;top:857.01px;font-size:6.9px;transform:scaleX(0.9565);transform-origin:left;">Authority</div>
<div class="t" style="right:477.20px;top:857.01px;font-size:6.9px;">2</div>
<div class="t" style="right:438.75px;top:857.01px;font-size:6.9px;">2</div>
<div class="t" style="right:385.30px;top:857.01px;font-size:6.9px;">0</div>
<div class="t" style="right:287.50px;top:857.01px;font-size:6.9px;">0</div>
<div class="t" style="left:162.00px;top:873.39px;font-size:6.9px;transform:scaleX(0.9565);transform-origin:left;">Bar</div>
<div class="t" style="right:477.20px;top:873.39px;font-size:6.9px;">1</div>
<div class="t" style="right:438.75px;top:873.39px;font-size:6.9px;">0</div>
<div class="t" style="right:385.30px;top:873.39px;font-size:6.9px;">0</div>
<div class="t" style="right:287.50px;top:873.39px;font-size:6.9px;">0</div>
<div style="position:absolute;left:158.75px;top:881.16px;width:482.50px;height:16.38px;background:#3d3d3d"></div>
<div class="t" style="left:162.00px;top:889.77px;font-size:6.9px;transform:scaleX(0.9565);transform-origin:left;">Foo</div>
<div class="t" style="right:477.20px;top:889.77px;font-size:6.9px;">2</div>
<div class="t" style="right:438.75px;top:889.77px;font-size:6.9px;">7</div>
<div class="t" style="right:385.30px;top:889.77px;font-size:6.9px;">0</div>
<div class="t" style="right:287.50px;top:889.77px;font-size:6.9px;">0</div>
<div class="t" style="left:162.00px;top:906.15px;font-size:6.9px;transform:scaleX(0.9565);transform-origin:left;">PersistentToken</div>
<div class="t" style="right:477.20px;top:906.15px;font-size:6.9px;">0</div>
<div class="t" style="right:438.75px;top:906.15px;font-size:6.9px;">0</div>
<div class="t" style="right:385.30px;top:906.15px;font-size:6.9px;">2</div>
<div class="t" style="right:287.50px;top:906.15px;font-size:6.9px;">0</div>
<div style="position:absolute;left:158.75px;top:913.92px;width:482.50px;height:16.38px;background:#3d3d3d"></div>
<div class="t" style="left:162.00px;top:922.53px;font-size:6.9px;transform:scaleX(0.9565);transform-origin:left;">User</div>
<div class="t" style="right:477.20px;top:922.53px;font-size:6.9px;">1</div>
<div class="t" style="right:438.75px;top:922.53px;font-size:6.9px;">1</div>
<div class="t" style="right:385.30px;top:922.53px;font-size:6.9px;">0</div>
<div class="t" style="right:287.50px;top:922.53px;font-size:6.9px;">0</div>
<div class="t" style="left:158.60px;top:955.20px;font-size:12.4px;transform:scaleX(0.9164);transform-origin:left;-webkit-text-stroke-width:0.7px;word-spacing:-0.8px;">DataSource statistics (time in millisecond)</div>
<div class="t" style="left:162.00px;top:974.51px;font-size:6.9px;font-weight:700;transform:scaleX(0.9069);transform-origin:left;-webkit-text-stroke-width:0.42px;">Usage (3 / 10)</div>
<div class="t" style="right:500.00px;top:974.51px;font-size:6.9px;font-weight:700;transform:scaleX(0.9218);transform-origin:right;-webkit-text-stroke-width:0.42px;">Count</div>
<div class="t" style="right:451.25px;top:974.51px;font-size:6.9px;font-weight:700;transform:scaleX(0.9475);transform-origin:right;-webkit-text-stroke-width:0.42px;">Mean</div>
<div class="t" style="right:411.00px;top:974.51px;font-size:6.9px;font-weight:700;transform:scaleX(0.9853);transform-origin:right;-webkit-text-stroke-width:0.42px;">Min</div>
<div class="t" style="right:370.30px;top:974.51px;font-size:6.9px;font-weight:700;transform:scaleX(1.0189);transform-origin:right;-webkit-text-stroke-width:0.42px;">p50</div>
<div class="t" style="right:329.70px;top:974.51px;font-size:6.9px;font-weight:700;transform:scaleX(1.0695);transform-origin:right;-webkit-text-stroke-width:0.42px;">p75</div>
<div class="t" style="right:282.80px;top:974.51px;font-size:6.9px;font-weight:700;transform:scaleX(1.0189);transform-origin:right;-webkit-text-stroke-width:0.42px;">p95</div>
<div class="t" style="right:228.10px;top:974.51px;font-size:6.9px;font-weight:700;transform:scaleX(0.9684);transform-origin:right;-webkit-text-stroke-width:0.42px;">p99</div>
<div class="t" style="right:162.00px;top:974.51px;font-size:6.9px;font-weight:700;transform:scaleX(0.9846);transform-origin:right;-webkit-text-stroke-width:0.42px;">Max</div>
<div style="position:absolute;left:158.75px;top:981.90px;width:482.50px;height:20.70px;background:#3d3d3d"></div>
<div class="prog" style="left:162.05px;top:985.20px;width:87.95px;height:5.40px;border-radius:2.70px"><div class="pb" style="width:26.38px;background-color:#00bc8c"><span class="pl">30%</span></div></div>
<div class="t" style="right:500.00px;top:990.61px;font-size:6.9px;">31</div>
<div class="t" style="right:451.25px;top:990.61px;font-size:6.9px;">17.51</div>
<div class="t" style="right:411.00px;top:990.61px;font-size:6.9px;">1.00</div>
<div class="t" style="right:370.30px;top:990.61px;font-size:6.9px;">4.00</div>
<div class="t" style="right:329.70px;top:990.61px;font-size:6.9px;">8.00</div>
<div class="t" style="right:282.80px;top:990.61px;font-size:6.9px;">63.00</div>
<div class="t" style="right:228.10px;top:990.61px;font-size:6.9px;">235.00</div>
<div class="t" style="right:162.00px;top:990.61px;font-size:6.9px;">1,078.00</div>
<div class="t" style="left:150.00px;top:1034.41px;font-size:6.9px;transform:scaleX(0.9565);transform-origin:left;">This is your footer</div>
</body></html>
